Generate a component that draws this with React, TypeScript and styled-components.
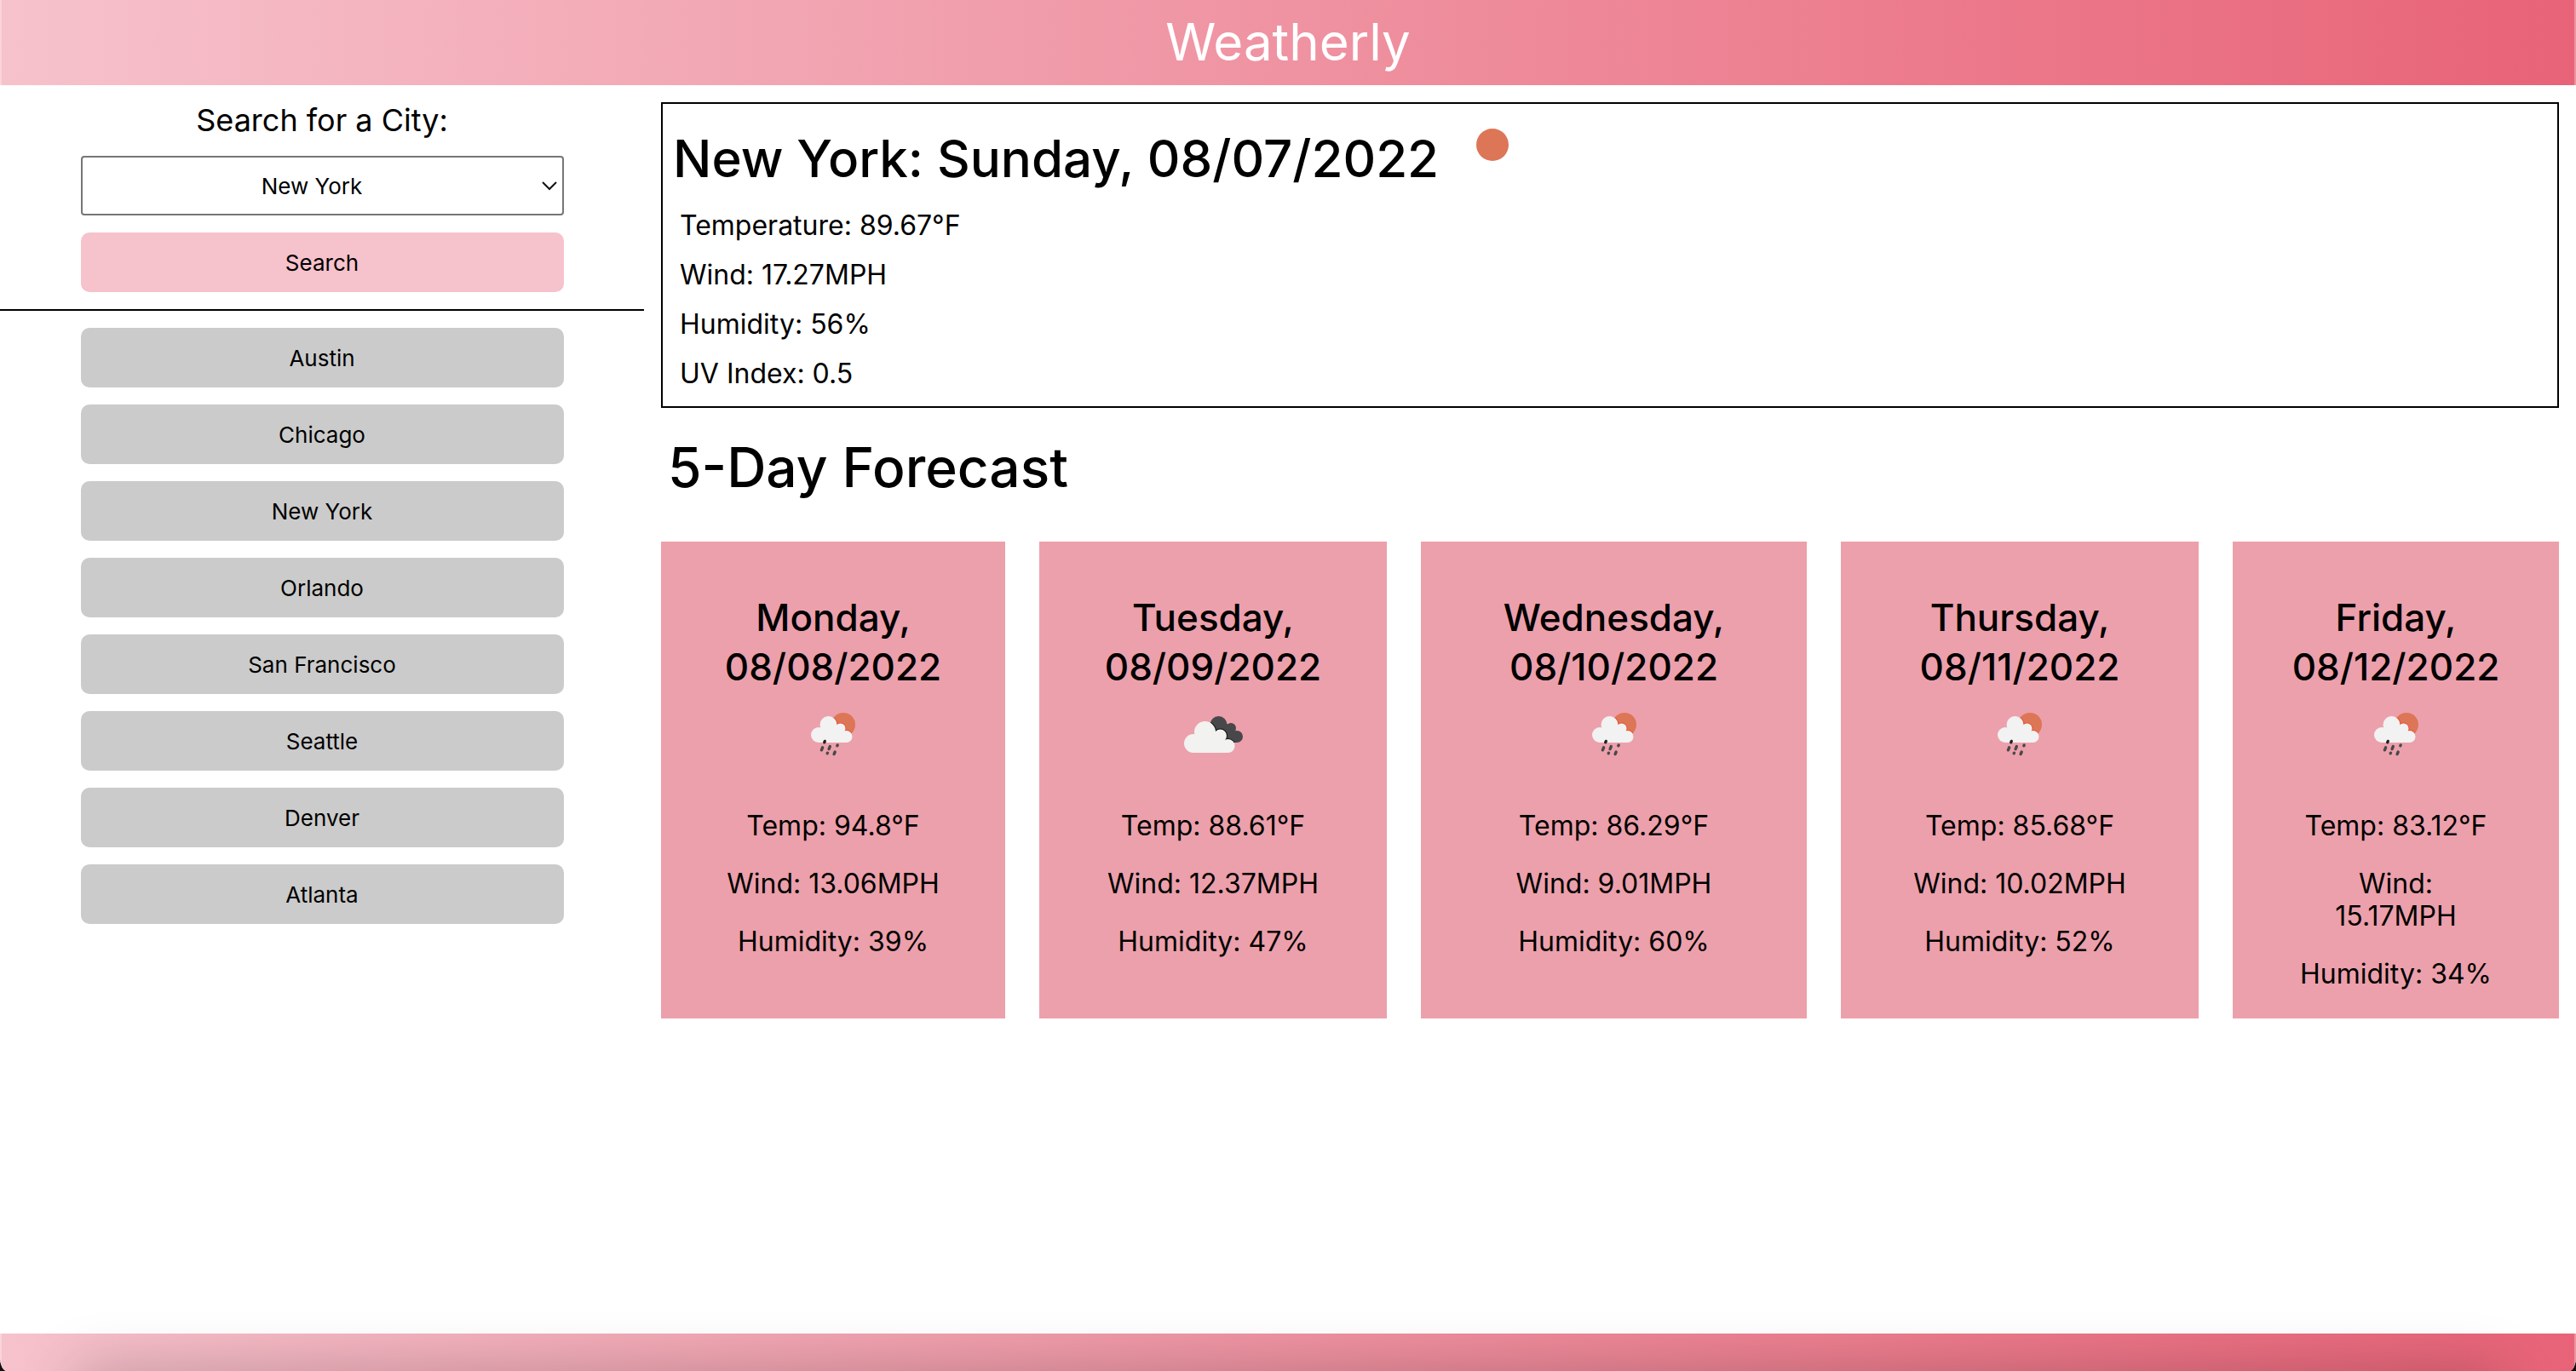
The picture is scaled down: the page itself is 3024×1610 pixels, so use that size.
import React, { useId, useState } from "react";
import styled, { createGlobalStyle } from "styled-components";

const GlobalStyle = createGlobalStyle`
  *, *::before, *::after { box-sizing: border-box; }
  html { background: #111; }
  body { margin: 0; color: #000; font-family: Inter, "Liberation Sans", sans-serif; }
  h1, h2, h3, p, ul { margin: 0; padding: 0; }
`;

const gradient = "linear-gradient(to right, #f6c2cc, #e86377)";

const Page = styled.div`
  position: relative;
  display: flex;
  flex-direction: column;
  min-height: 100vh;
  overflow: hidden;
  background: #fff;
  border-radius: 0 0 8px 8px / 0 0 16px 16px;
`;

const Header = styled.header`
  padding-bottom: 2px;
  background: ${gradient};
  box-shadow: inset 2px 0 rgba(255, 255, 255, 0.3), inset -2px 0 rgba(255, 255, 255, 0.3);
`;

const Brand = styled.h1`
  color: #fff;
  font-size: 60px;
  font-weight: 400;
  line-height: 98px;
  text-align: center;
`;

const Content = styled.div`
  display: flex;
  flex: 1;
  align-items: flex-start;
`;

const Sidebar = styled.aside`
  display: flex;
  flex-direction: column;
  gap: 20px;
  width: 25%;
  padding-top: 20px;
`;

const Controls = styled.form`
  display: flex;
  flex-direction: column;
  align-items: center;
  gap: 20px;
`;

const Label = styled.label`
  font-size: 36px;
  line-height: 43px;
`;

const SelectWrap = styled.div`
  position: relative;
  width: 75%;
`;

const CitySelect = styled.select`
  display: block;
  width: 100%;
  height: 70px;
  padding: 0 24px 0 0;
  appearance: none;
  border: 2px solid #767676;
  border-radius: 4px;
  background: #fff;
  color: #000;
  font: 400 26px Inter, "Liberation Sans", sans-serif;
  text-align: center;
  text-align-last: center;
`;

const Chevron = styled.svg`
  position: absolute;
  top: 50%;
  right: 8px;
  width: 18px;
  height: 12px;
  margin-top: -6px;
  pointer-events: none;
`;

const Button = styled.button<{ $tone: string }>`
  width: 75%;
  height: 70px;
  border: 0;
  border-radius: 10px;
  background: ${(p) => p.$tone};
  color: #000;
  font: 400 26px Inter, "Liberation Sans", sans-serif;
`;

const Divider = styled.hr`
  width: 100%;
  margin: 0;
  border: 0;
  border-top: 2px solid #000;
`;

const History = styled.div`
  display: flex;
  flex-direction: column;
  align-items: center;
  gap: 20px;
`;

const Main = styled.main`
  flex: 1;
  min-width: 0;
  padding: 20px;
`;

const Current = styled.section`
  padding: 24px 0 9px;
  border: 2px solid #000;
`;

const CurrentHead = styled.div`
  display: flex;
  align-items: flex-start;
  gap: 44px;
  margin-bottom: 10px;
  padding-left: 12px;
`;

const CurrentTitle = styled.h2`
  font-size: 60px;
  font-weight: 500;
  line-height: 80px;
`;

const Sun = styled.svg`
  width: 38px;
  height: 38px;
  margin-top: 5px;
`;

const CurrentStat = styled.p`
  padding-left: 20px;
  font-size: 32px;
  line-height: 58px;
`;

const ForecastTitle = styled.h2`
  margin: 30px 0 47px;
  padding-left: 8px;
  font-size: 64px;
  font-weight: 500;
  line-height: 80px;
`;

const Cards = styled.div`
  display: grid;
  grid-template-columns: 404fr 408fr 453fr 420fr 383fr;
  gap: 40px;
`;

const Card = styled.article`
  display: flex;
  flex-direction: column;
  align-items: center;
  padding: 60px 0 33px;
  background: #eca0ab;
  text-align: center;
`;

const CardTitle = styled.h3`
  padding: 0 40px;
  font-size: 44px;
  font-weight: 500;
  line-height: 58px;
`;

const WeatherIcon = styled.svg`
  width: 100px;
  height: 100px;
`;

const Stats = styled.div`
  display: flex;
  flex-direction: column;
  gap: 30px;
  width: 100%;
  padding: 39px 75px 0;
`;

const Stat = styled.p`
  font-size: 32px;
  line-height: 38px;
`;

const Footer = styled.footer`
  height: 44px;
  background: ${gradient};
  box-shadow: inset 2px 0 rgba(255, 255, 255, 0.3), inset -2px 0 rgba(255, 255, 255, 0.3);
`;

const BottomShade = styled.div`
  position: absolute;
  top: 100%;
  left: 90px;
  right: 90px;
  height: 80px;
  box-shadow: 0 0 70px rgba(0, 0, 0, 0.22);
  pointer-events: none;
`;

type Kind = "rain" | "clouds";

function RainShape() {
  return (
    <>
      <circle cx="33" cy="51" r="9" />
      <circle cx="44.5" cy="39" r="10" />
      <circle cx="58.5" cy="43.5" r="6" />
      <circle cx="65.5" cy="53" r="7" />
      <path d="M33 60V44h24l9 9v7z" />
    </>
  );
}

function CloudShape() {
  return (
    <>
      <circle cx="27" cy="61" r="11" />
      <circle cx="40.5" cy="47.5" r="12.5" />
      <circle cx="58.5" cy="52" r="7.5" />
      <circle cx="67.5" cy="64" r="8" />
      <path d="M27 72V52h30l10 10v10z" />
    </>
  );
}

function BackCloud() {
  return (
    <>
      <circle cx="56.5" cy="39" r="10" />
      <circle cx="71" cy="43" r="6" />
      <circle cx="78" cy="53" r="7" />
      <path d="M60 36l12 4 6 8v12H66L54 46z" />
    </>
  );
}

function Icon({ kind }: { kind: Kind }) {
  const id = useId();
  if (kind === "rain") {
    return (
      <WeatherIcon viewBox="0 0 100 100" role="img" aria-label="Rain">
        <clipPath id={id}>
          <circle cx="62" cy="39" r="14" />
        </clipPath>
        <circle cx="62" cy="39" r="14" fill="#dc7657" />
        <g clipPath={`url(#${id})`} fill="#e8573a" stroke="#e8573a" strokeWidth="2">
          <RainShape />
        </g>
        <g fill="#f2f2f2">
          <RainShape />
        </g>
        <g stroke="#48484a" strokeWidth="3.4" strokeLinecap="round">
          <path d="M40.3 58.4l-.6 1.4" stroke="#222" />
          <path d="M37.6 65.8l-1.2 3M46.3 64.6l-1.2 3M55.2 63l-.4.8M43.5 72.2l-.3.5M52.2 71l-1.1 2.6" />
        </g>
      </WeatherIcon>
    );
  }
  return (
    <WeatherIcon viewBox="0 0 100 100" role="img" aria-label="Clouds">
      <clipPath id={id}>
        <BackCloud />
      </clipPath>
      <g fill="#48484a">
        <BackCloud />
      </g>
      <g clipPath={`url(#${id})`} fill="#111" stroke="#111" strokeWidth="2">
        <CloudShape />
      </g>
      <g fill="#f2f2f1">
        <CloudShape />
      </g>
    </WeatherIcon>
  );
}

const cities = ["Austin", "Chicago", "New York", "Orlando", "San Francisco", "Seattle", "Denver", "Atlanta"];

const current = ["Temperature: 89.67°F", "Wind: 17.27MPH", "Humidity: 56%", "UV Index: 0.5"];

const forecast: { title: string; kind: Kind; stats: string[] }[] = [
  { title: "Monday, 08/08/2022", kind: "rain", stats: ["Temp: 94.8°F", "Wind: 13.06MPH", "Humidity: 39%"] },
  { title: "Tuesday, 08/09/2022", kind: "clouds", stats: ["Temp: 88.61°F", "Wind: 12.37MPH", "Humidity: 47%"] },
  { title: "Wednesday, 08/10/2022", kind: "rain", stats: ["Temp: 86.29°F", "Wind: 9.01MPH", "Humidity: 60%"] },
  { title: "Thursday, 08/11/2022", kind: "rain", stats: ["Temp: 85.68°F", "Wind: 10.02MPH", "Humidity: 52%"] },
  { title: "Friday, 08/12/2022", kind: "rain", stats: ["Temp: 83.12°F", "Wind: 15.17MPH", "Humidity: 34%"] },
];

export default function App() {
  const [city, setCity] = useState("New York");
  return (
    <>
      <GlobalStyle />
      <Page>
        <Header>
          <Brand>Weatherly</Brand>
        </Header>
        <Content>
          <Sidebar>
            <Controls onSubmit={(e) => e.preventDefault()}>
              <Label htmlFor="city">Search for a City:</Label>
              <SelectWrap>
                <CitySelect id="city" value={city} onChange={(e) => setCity(e.target.value)}>
                  {cities.map((name) => (
                    <option key={name}>{name}</option>
                  ))}
                </CitySelect>
                <Chevron viewBox="0 0 18 12" fill="none" stroke="#111" strokeWidth="2" aria-hidden="true">
                  <path d="M1 2l8 8 8-8" />
                </Chevron>
              </SelectWrap>
              <Button type="submit" $tone="#f6c2cc">Search</Button>
            </Controls>
            <Divider />
            <History>
              {cities.map((name) => (
                <Button key={name} type="button" $tone="#cbcbcb" onClick={() => setCity(name)}>
                  {name}
                </Button>
              ))}
            </History>
          </Sidebar>
          <Main>
            <Current>
              <CurrentHead>
                <CurrentTitle>New York: Sunday, 08/07/2022</CurrentTitle>
                <Sun viewBox="0 0 38 38" role="img" aria-label="Clear sky">
                  <circle cx="19" cy="19" r="19" fill="#dc7657" />
                </Sun>
              </CurrentHead>
              {current.map((line) => (
                <CurrentStat key={line}>{line}</CurrentStat>
              ))}
            </Current>
            <ForecastTitle>5-Day Forecast</ForecastTitle>
            <Cards>
              {forecast.map((day) => (
                <Card key={day.title}>
                  <CardTitle>{day.title}</CardTitle>
                  <Icon kind={day.kind} />
                  <Stats>
                    {day.stats.map((line) => (
                      <Stat key={line}>{line}</Stat>
                    ))}
                  </Stats>
                </Card>
              ))}
            </Cards>
          </Main>
        </Content>
        <Footer />
        <BottomShade />
      </Page>
    </>
  );
}
